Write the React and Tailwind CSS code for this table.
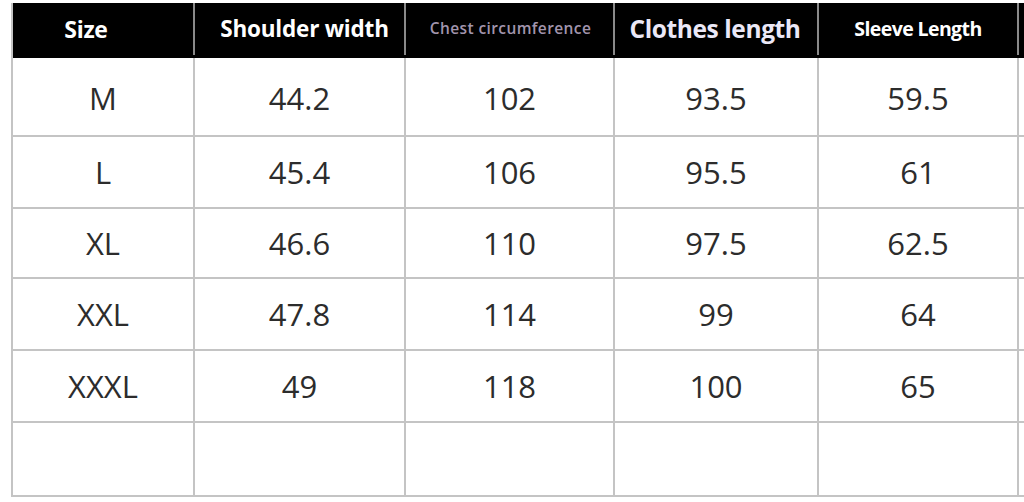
import React from "react";

const rows = [
  ["M", "44.2", "102", "93.5", "59.5"],
  ["L", "45.4", "106", "95.5", "61"],
  ["XL", "46.6", "110", "97.5", "62.5"],
  ["XXL", "47.8", "114", "99", "64"],
  ["XXXL", "49", "118", "100", "65"],
  ["", "", "", "", ""],
];
const heights = ["h-[79px]", "h-[72px]", "h-[70px]", "h-[72px]", "h-[72px]", "h-[74px]"];
const pads = ["pt-[4px]", "pt-0", "pt-0", "pt-0", "pt-0", "pt-0"];
const widths = ["w-[182px]", "w-[211px]", "w-[209px]", "w-[204px]", "w-[200px]", "w-[200px]"];

export default function App() {
  return (
    <div className="w-[1024px] h-[502px] overflow-hidden bg-white" style={{ fontFamily: '"Open Sans", "Liberation Sans", sans-serif' }}>
      <div className="ml-[11px] mt-[3px] w-[1220px] border-l-2 border-[#c4c4c4]">
        <div className="flex h-[55px] bg-black pb-[3px]">
          <div className={`${widths[0]} shrink-0 flex items-center justify-center border-r-2 border-[#8a8a8a] text-white font-bold text-[23px] pr-[34px] tracking-[-0.3px]`}>Size</div>
          <div className={`${widths[1]} shrink-0 flex items-center justify-center border-r-2 border-[#8a8a8a] text-white font-bold text-[22.5px] tracking-[-0.2px] pl-[10px]`}>Shoulder width</div>
          <div className={`${widths[2]} shrink-0 flex items-center justify-center border-r-2 border-[#8a8a8a] text-[#a295ad] font-semibold text-[15.5px] tracking-[0.4px] pl-[2px]`}>Chest circumference</div>
          <div className={`${widths[3]} shrink-0 flex items-center justify-center border-r-2 border-[#8a8a8a] text-[#ebe8f7] font-bold text-[24.5px] tracking-[-0.4px] pr-[2px]`}>Clothes length</div>
          <div className={`${widths[4]} shrink-0 flex items-center justify-center border-r-2 border-[#8a8a8a] text-white font-bold text-[19.5px] tracking-[-0.6px]`}>Sleeve Length</div>
          <div className={`${widths[5]} shrink-0`}></div>
        </div>
        {rows.map((r, i) => (
          <div key={i} className={`flex ${heights[i]} border-b-2 border-[#c4c4c4]`}>
            {r.map((c, j) => (
              <div key={j} className={`${widths[j]} shrink-0 flex items-center justify-center border-r-2 border-[#c4c4c4] text-[#2c2c2c] text-[31px] ${pads[i]}`}>{c}</div>
            ))}
            <div className={`${widths[5]} shrink-0`}></div>
          </div>
        ))}
      </div>
    </div>
  );
}
